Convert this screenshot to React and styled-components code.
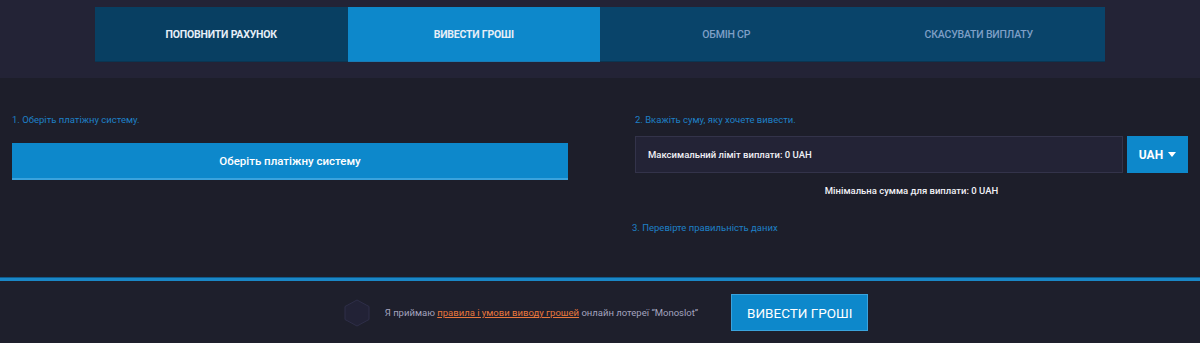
import React from "react";
import styled, { createGlobalStyle } from "styled-components";

const GlobalStyle = createGlobalStyle`
  html, body {
    margin: 0;
    padding: 0;
    background: #1d1e2a;
    font-family: Roboto, "Open Sans", Arial, sans-serif;
  }
  * { box-sizing: border-box; }
`;

const Header = styled.div`
  background: #232336;
  height: 78px;
  padding-top: 7px;
`;

const Tabs = styled.div`
  width: 1010px;
  margin: 0 auto;
  display: grid;
  grid-template-columns: repeat(4, 1fr);
  height: 55px;
`;

const Tab = styled.div`
  display: flex;
  align-items: center;
  justify-content: center;
  font-size: 10.5px;
  letter-spacing: -0.2px;
  text-transform: uppercase;
  background: ${({ active, dim }) =>
    active ? "#0d88cb" : dim ? "#09446a" : "#083f62"};
  color: ${({ dim }) => (dim ? "#7e9fc6" : "#e6eef7")};
  font-weight: ${({ dim }) => (dim ? 500 : 700)};
  border-bottom: 1px solid ${({ active }) => (active ? "#1a7bb5" : "#0a3552")};
`;

const Main = styled.div`
  display: grid;
  grid-template-columns: 556px 1fr;
  column-gap: 67px;
  padding: 36px 12px 0;
  height: 199px;
`;

const Column = styled.div`
  display: flex;
  flex-direction: column;
`;

const Step = styled.div`
  font-size: 9.5px;
  color: #1e80c6;
  margin-bottom: ${({ gap }) => gap || 0}px;
  margin-left: ${({ shift }) => shift || 0}px;
`;

const SelectButton = styled.button`
  height: 37px;
  width: 100%;
  border: none;
  border-bottom: 2px solid #3aa3dd;
  background: #0d88cb;
  color: #ffffff;
  font-family: inherit;
  font-size: 11.5px;
  font-weight: 500;
  cursor: pointer;
`;

const AmountRow = styled.div`
  display: flex;
  gap: 4px;
  height: 37px;
`;

const AmountField = styled.div`
  flex: 1;
  background: #232336;
  border: 1px solid #33334a;
  display: flex;
  align-items: center;
  padding-left: 12px;
  color: #f1f1f6;
  font-size: 9.5px;
  font-weight: 500;
`;

const CurrencyButton = styled.button`
  width: 61px;
  border: none;
  background: #0d88cb;
  color: #ffffff;
  font-family: inherit;
  font-size: 12px;
  font-weight: 700;
  display: flex;
  align-items: center;
  justify-content: center;
  gap: 5px;
  cursor: pointer;
`;

const Caret = styled.span`
  width: 0;
  height: 0;
  border-left: 4px solid transparent;
  border-right: 4px solid transparent;
  border-top: 5px solid #ffffff;
`;

const MinNote = styled.div`
  text-align: center;
  font-size: 9.5px;
  font-weight: 500;
  color: #f1f1f6;
  margin: 12px 0 26px;
`;

const Divider = styled.div`
  height: 4px;
  background: #1a87c7;
  border-top: 1px solid #0f5b8c;
`;

const Footer = styled.div`
  height: 63px;
  background: #1e1f2c;
  display: flex;
  align-items: center;
  justify-content: center;
  padding-left: 12px;
`;

const Agree = styled.label`
  display: flex;
  align-items: center;
  gap: 15px;
  font-size: 9.5px;
  color: #a3a3bf;
  margin-right: 33px;
`;

const TermsLink = styled.a`
  color: #e8773d;
  text-decoration: underline;
`;

const WithdrawButton = styled.button`
  width: 137px;
  height: 37px;
  border: 1px solid #3aa3dd;
  background: #0d88cb;
  color: #ffffff;
  font-family: inherit;
  font-size: 13.5px;
  font-weight: 400;
  text-transform: uppercase;
  cursor: pointer;
`;

const Hexagon = () => (
  <svg width="26" height="28" viewBox="0 0 26 28">
    <polygon
      points="13,1 25,7.5 25,20.5 13,27 1,20.5 1,7.5"
      fill="#222236"
      stroke="#2e2e48"
      strokeWidth="1"
    />
  </svg>
);

const tabs = [
  { label: "Поповнити рахунок" },
  { label: "Вивести гроші", active: true },
  { label: "Обмін CP", dim: true },
  { label: "Скасувати виплату", dim: true },
];

const App = () => (
  <>
    <GlobalStyle />
    <Header>
      <Tabs>
        {tabs.map((t) => (
          <Tab key={t.label} active={t.active} dim={t.dim}>
            {t.label}
          </Tab>
        ))}
      </Tabs>
    </Header>
    <Main>
      <Column>
        <Step gap={18}>1. Оберіть платіжну систему.</Step>
        <SelectButton>Оберіть платіжну систему</SelectButton>
      </Column>
      <Column>
        <Step gap={11}>2. Вкажіть суму, яку хочете вивести.</Step>
        <AmountRow>
          <AmountField>Максимальний ліміт виплати: 0 UAH</AmountField>
          <CurrencyButton>
            UAH <Caret />
          </CurrencyButton>
        </AmountRow>
        <MinNote>Мінімальна сумма для виплати: 0 UAH</MinNote>
        <Step shift={-3}>3. Перевірте правильність даних</Step>
      </Column>
    </Main>
    <Divider />
    <Footer>
      <Agree>
        <Hexagon />
        <span>
          Я приймаю <TermsLink>правила і умови виводу грошей</TermsLink> онлайн
          лотереї “Monoslot”
        </span>
      </Agree>
      <WithdrawButton>Вивести гроші</WithdrawButton>
    </Footer>
  </>
);

export default App;
